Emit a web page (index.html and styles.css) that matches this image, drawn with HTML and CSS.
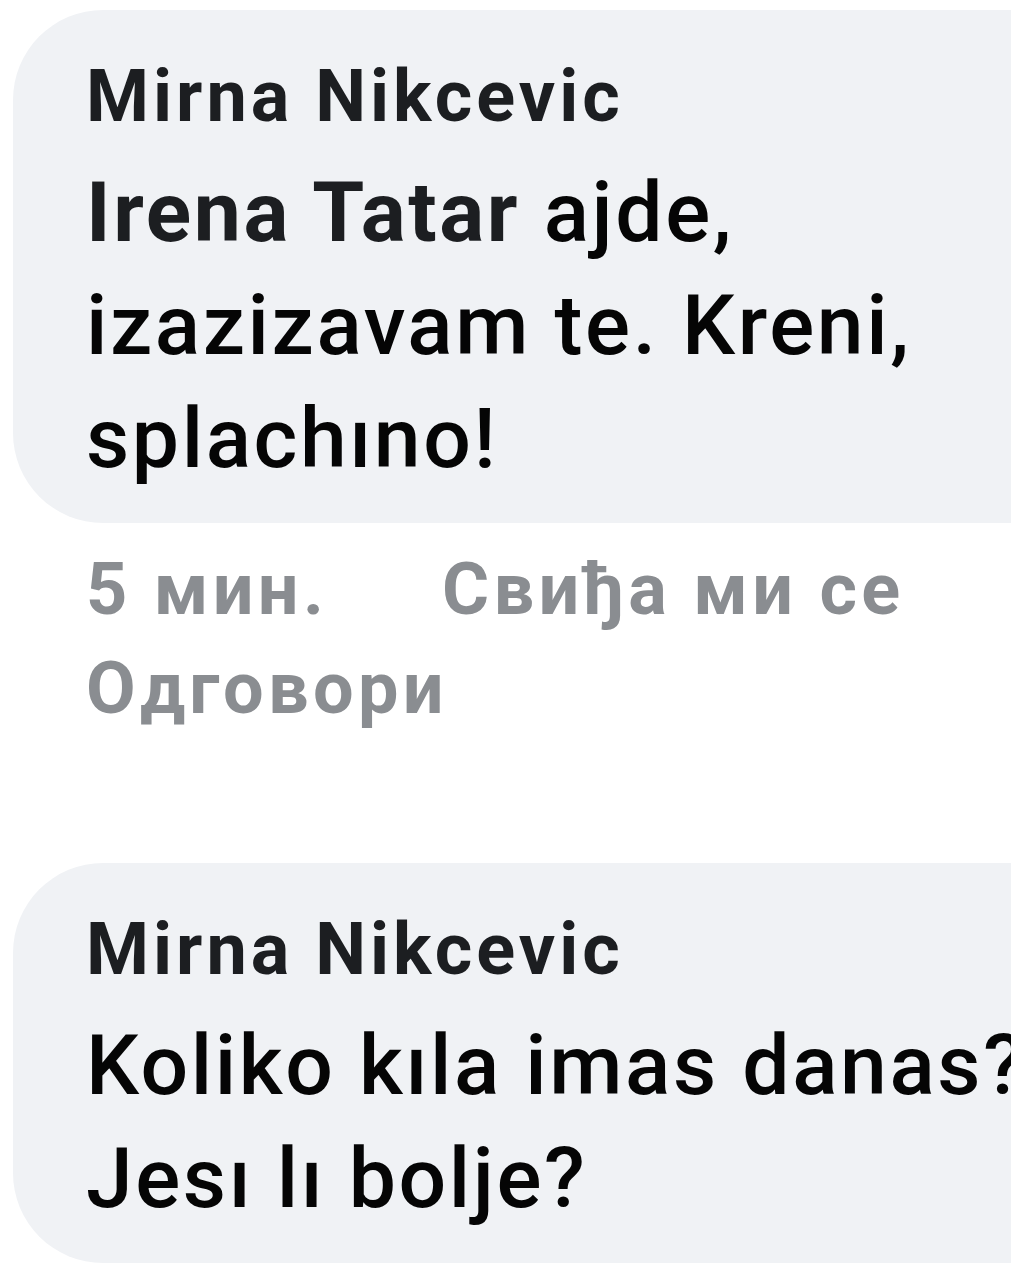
FILE: index.html
```html
<!DOCTYPE html>
<html lang="en">
<head>
    <meta charset="UTF-8">
    <meta name="viewport" content="width=device-width, initial-scale=1.0">
    <title>Comments</title>
    <link rel="stylesheet" href="styles.css">
</head>
<body>
    <!-- Comment thread -->
    <div class="thread">
        <div class="comment">
            <div class="bubble">
                <div class="author">Mirna Nikcevic</div>
                <div class="text"><span class="tag">Irena Tatar</span> ajde, izazizavam te. Kreni, splachıno!</div>
            </div>
            <div class="actions">
                <span class="action">5 мин.</span>
                <span class="action">Свиђа ми се</span>
                <span class="action">Одговори</span>
            </div>
        </div>

        <div class="comment">
            <div class="bubble">
                <div class="author">Mirna Nikcevic</div>
                <div class="text">Koliko kıla imas danas? Jesı lı bolje?</div>
            </div>
        </div>
    </div>
</body>
</html>
```

FILE: styles.css
```css
html, body {
    margin: 0;
    padding: 0;
    background: #fff;
    overflow: hidden;
}

body {
    font-family: Roboto, 'Liberation Sans', sans-serif;
    color: #050505;
}

.thread {
    width: 1200px;
    padding: 10px 0 0 13px;
}

.comment {
    margin-bottom: 125px;
}

.bubble {
    background: #f0f2f5;
    border-radius: 90px;
    padding: 44px 40px 28px 73px;
}

.author {
    font-size: 72px;
    font-weight: 700;
    line-height: 86px;
    letter-spacing: 4px;
    color: #1c1e21;
    margin-bottom: 16px;
}

.text {
    font-size: 84px;
    font-weight: 500;
    line-height: 113px;
    letter-spacing: 2.6px;
    width: 1000px;
}

.tag {
    font-weight: 700;
    color: #1c1e21;
}

.actions {
    display: flex;
    flex-wrap: wrap;
    column-gap: 114px;
    width: 1000px;
    padding: 17px 0 0 73px;
}

.action {
    font-size: 72px;
    font-weight: 700;
    line-height: 99px;
    letter-spacing: 4.3px;
    color: #8a8d91;
}
```
